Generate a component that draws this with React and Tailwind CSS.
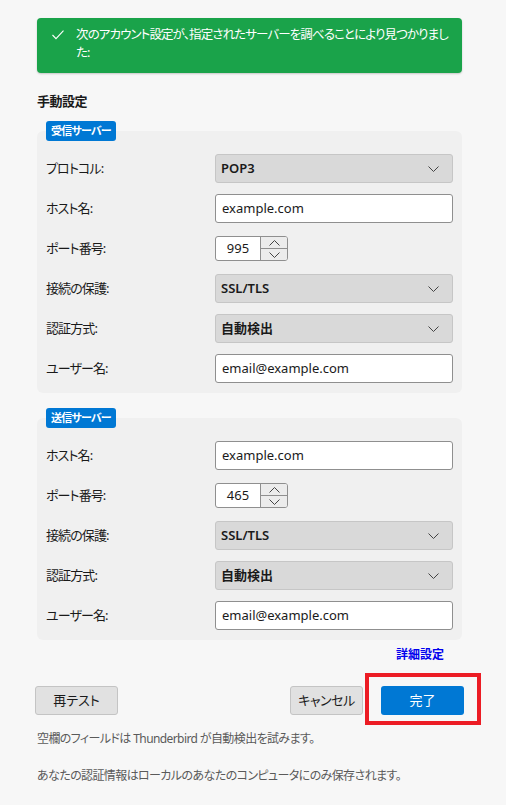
import React from "react";

const font = "font-['Noto_Sans','Noto_Sans_CJK_JP',sans-serif] [font-feature-settings:'palt']";

function Chevron({ className = "" }) {
  return (
    <svg width="11" height="6" viewBox="0 0 11 6" className={className}>
      <polyline points="0.5,0.5 5.5,5.5 10.5,0.5" fill="none" stroke="currentColor" strokeWidth="1" />
    </svg>
  );
}

function Select({ value }) {
  return (
    <div className="h-[29px] rounded-[3px] border border-[#c6c6c6] bg-[#d9d9d9] flex items-center justify-between pl-[5px] pr-[13px] text-[13px] font-semibold text-[#1a1a1a]">
      <span>{value}</span>
      <Chevron className="text-[#444]" />
    </div>
  );
}

function TextInput({ value }) {
  return (
    <div className="h-[29px] rounded-[3px] border border-[#8f8f8f] bg-white flex items-center px-[6px] text-[13px] text-[#1a1a1a]">
      {value}
    </div>
  );
}

function Spin({ value }) {
  return (
    <div className="h-[25px] w-[73px] flex rounded-[3px] border border-[#8f8f8f] bg-white overflow-hidden">
      <div className="w-[44px] flex items-center justify-center text-[13px] text-[#1a1a1a]">{value}</div>
      <div className="flex-1 flex flex-col border-l border-[#8f8f8f] bg-[#ececec] text-[#444]">
        <div className="flex-1 flex items-center justify-center border-b border-[#8f8f8f]">
          <Chevron className="rotate-180" />
        </div>
        <div className="flex-1 flex items-center justify-center">
          <Chevron />
        </div>
      </div>
    </div>
  );
}

function Row({ label, children }) {
  return (
    <div className="grid grid-cols-[169px_1fr] items-center h-[29px]">
      <span className="text-[13px] tracking-[-0.9px] text-[#1a1a1a]">{label}</span>
      <div>{children}</div>
    </div>
  );
}

function Group({ title, children, className = "" }) {
  return (
    <fieldset className={"rounded-[6px] bg-[#f0f0f0] px-[9px] pb-[10px] " + className}>
      <legend className="h-[20px] leading-[20px] rounded-[3px] bg-[#0078d4] px-[5px] text-[11px] tracking-[-0.8px] font-bold text-white">
        {title}
      </legend>
      <div className="pt-[13px] flex flex-col gap-[11px]">{children}</div>
    </fieldset>
  );
}

export default function App() {
  return (
    <div className={"min-h-screen bg-[#f7f7f7] pt-[18px] pb-[20px] " + font}>
      <div className="ml-[37px] w-[425px]">
        {/* found-settings banner */}
        <div className="flex rounded-[4px] bg-[#1aa34a] pt-[8px] pb-[11px] pl-[15px] pr-[6px] text-white shadow-[0_1px_2px_rgba(0,0,0,0.2)]">
          <svg width="12" height="10" viewBox="0 0 12 10" className="mt-[4px] mr-[12px] shrink-0">
            <polyline points="0.5,5 4,8.7 11.5,0.7" fill="none" stroke="white" strokeWidth="1.1" />
          </svg>
          <p className="text-[12.5px] leading-[18px] tracking-[-0.9px]">
            次のアカウント設定が、指定されたサーバーを調べることにより見つかりまし
            <br />
            た:
          </p>
        </div>

        <h2 className="mt-[19px] text-[13px] leading-[18px] tracking-[-0.5px] font-bold text-[#1a1a1a]">手動設定</h2>

        <Group title="受信サーバー" className="mt-[11px]">
          <Row label="プロトコル:"><Select value="POP3" /></Row>
          <Row label="ホスト名:"><TextInput value="example.com" /></Row>
          <Row label="ポート番号:"><Spin value="995" /></Row>
          <Row label="接続の保護:"><Select value="SSL/TLS" /></Row>
          <Row label="認証方式:"><Select value="自動検出" /></Row>
          <Row label="ユーザー名:"><TextInput value="email@example.com" /></Row>
        </Group>

        <Group title="送信サーバー" className="mt-[15px]">
          <Row label="ホスト名:"><TextInput value="example.com" /></Row>
          <Row label="ポート番号:"><Spin value="465" /></Row>
          <Row label="接続の保護:"><Select value="SSL/TLS" /></Row>
          <Row label="認証方式:"><Select value="自動検出" /></Row>
          <Row label="ユーザー名:"><TextInput value="email@example.com" /></Row>
        </Group>

        <div className="flex justify-end pr-[18px] mt-[6px]">
          <a className="text-[12px] leading-[18px] font-bold text-[#0000ee] cursor-pointer">詳細設定</a>
        </div>

        <div className="flex items-center mt-[22px] -ml-[2px] mr-[-2px]">
          <button className="h-[29px] w-[83px] rounded-[3px] border border-[#c4c4c4] bg-[#e1e1e1] text-[13px] text-[#1a1a1a]">
            再テスト
          </button>
          <button className="ml-auto h-[29px] w-[73px] rounded-[3px] border border-[#c4c4c4] bg-[#e1e1e1] text-[13px] tracking-[-0.5px] text-[#1a1a1a]">
            キャンセル
          </button>
          <div className="relative ml-[18px]">
            <button className="h-[29px] w-[83px] rounded-[3px] bg-[#0078d4] text-[13px] text-white">完了</button>
            <span className="pointer-events-none absolute -left-[16px] -right-[17px] -top-[13px] -bottom-[10px] border-[4px] border-[#ec1c24]" />
          </div>
        </div>

        <p className="mt-[15px] text-[12px] leading-[18px] tracking-[-0.6px] text-[#5a5a5a]">
          空欄のフィールドは Thunderbird が自動検出を試みます。
        </p>
        <p className="mt-[19px] text-[12px] leading-[18px] tracking-[-0.6px] text-[#5a5a5a]">
          あなたの認証情報はローカルのあなたのコンピュータにのみ保存されます。
        </p>
      </div>
    </div>
  );
}
